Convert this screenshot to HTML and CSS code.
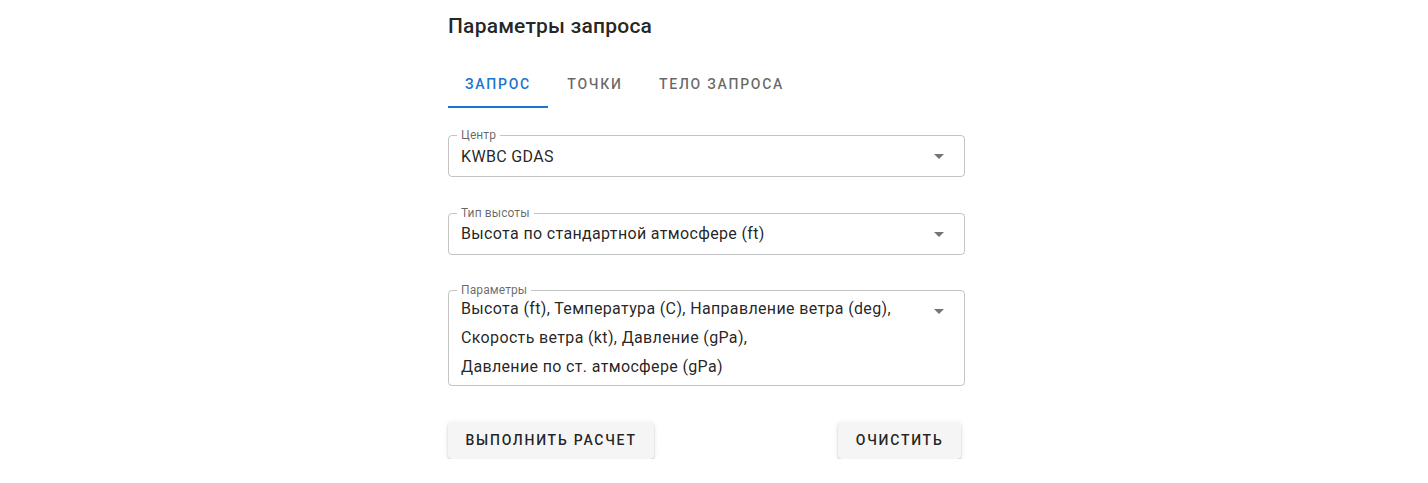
FILE: index.html
```html
<!DOCTYPE html>
<html lang="ru">
<head>
<meta charset="utf-8">
<title>Параметры запроса</title>
<link rel="stylesheet" href="styles.css">
</head>
<body>
<main class="panel">
  <h2 class="title">Параметры запроса</h2>
  <nav class="tabs">
    <div class="tab tab-active">Запрос</div>
    <div class="tab">Точки</div>
    <div class="tab">Тело запроса</div>
  </nav>
  <div class="form">
    <div class="field">
      <span class="field-label">Центр</span>
      <div class="field-value">KWBC GDAS</div>
      <svg class="arrow" viewBox="0 0 24 24" width="24" height="24"><path d="M7 10l5 5 5-5z"/></svg>
    </div>
    <div class="field">
      <span class="field-label">Тип высоты</span>
      <div class="field-value">Высота по стандартной атмосфере (ft)</div>
      <svg class="arrow" viewBox="0 0 24 24" width="24" height="24"><path d="M7 10l5 5 5-5z"/></svg>
    </div>
    <div class="field field-multi">
      <span class="field-label">Параметры</span>
      <div class="field-value"><span class="item">Высота (ft),</span> <span class="item">Температура (C),</span> <span class="item">Направление ветра (deg),</span> <span class="item">Скорость ветра (kt),</span> <span class="item">Давление (gPa),</span> <span class="item">Давление по ст. атмосфере (gPa)</span></div>
      <svg class="arrow" viewBox="0 0 24 24" width="24" height="24"><path d="M7 10l5 5 5-5z"/></svg>
    </div>
    <div class="actions">
      <button class="btn">Выполнить расчет</button>
      <button class="btn">Очистить</button>
    </div>
  </div>
</main>
</body>
</html>
```
FILE: styles.css
```css
* { box-sizing: border-box; }
html, body { margin: 0; padding: 0; background: #fff; }
body {
  font-family: Roboto, "Liberation Sans", sans-serif;
  color: rgba(0,0,0,0.87);
}
.panel {
  width: 517px;
  margin-left: 448px;
  padding-top: 10px;
}
.title {
  margin: 0;
  font-size: 21px;
  font-weight: 500;
  line-height: 32px;
  letter-spacing: 0.2px;
}
.tabs {
  display: flex;
  margin-top: 18px;
  height: 48px;
}
.tab {
  height: 48px;
  min-width: 94px;
  padding: 2px 17px 0 17px;
  display: flex;
  align-items: center;
  justify-content: center;
  font-size: 14px;
  font-weight: 500;
  text-transform: uppercase;
  letter-spacing: 1.75px;
  color: rgba(0,0,0,0.6);
  border-bottom: 2px solid transparent;
}
.tab-active {
  color: #1976d2;
  border-bottom-color: #1976d2;
}
.form {
  display: flex;
  flex-direction: column;
  gap: 35.5px;
  margin-top: 27px;
}
.field {
  position: relative;
  border: 1px solid rgba(0,0,0,0.23);
  border-radius: 4px;
  height: 42px;
  display: flex;
  align-items: center;
  padding: 0 40px 0 12px;
}
.field-label {
  position: absolute;
  top: -8px;
  left: 8px;
  padding: 0 4px;
  background: #fff;
  font-size: 12px;
  line-height: 14px;
  letter-spacing: 0.1px;
  color: rgba(0,0,0,0.6);
}
.field-value {
  font-size: 16px;
  line-height: 23px;
  letter-spacing: 0.35px;
}
.field-multi {
  height: 96px;
  align-items: flex-start;
  padding-top: 2.5px;
  padding-right: 50px;
}
.field-multi .field-value {
  line-height: 29px;
}
.item { white-space: nowrap; }
.arrow {
  position: absolute;
  right: 13px;
  top: 8px;
  width: 24px;
  height: 24px;
  fill: rgba(0,0,0,0.54);
}
.actions {
  display: flex;
  justify-content: space-between;
  padding-right: 4px;
}
.btn {
  font-family: inherit;
  font-size: 14px;
  font-weight: 500;
  letter-spacing: 1.75px;
  text-transform: uppercase;
  color: rgba(0,0,0,0.87);
  background: #f5f5f5;
  border: none;
  border-radius: 4px;
  height: 37px;
  padding: 0 17.5px;
  box-shadow: 0 3px 1px -2px rgba(0,0,0,0.2), 0 2px 2px 0 rgba(0,0,0,0.14), 0 1px 5px 0 rgba(0,0,0,0.12);
}
```
